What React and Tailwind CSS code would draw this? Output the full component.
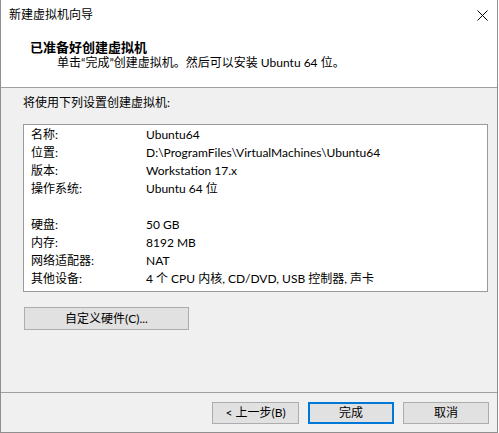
import React from 'react'

const rows = [
  ['名称:', 'Ubuntu64'],
  ['位置:', 'D:\\ProgramFiles\\VirtualMachines\\Ubuntu64'],
  ['版本:', 'Workstation 17.x'],
  ['操作系统:', 'Ubuntu 64 位'],
  ['', ''],
  ['硬盘:', '50 GB'],
  ['内存:', '8192 MB'],
  ['网络适配器:', 'NAT'],
  ['其他设备:', '4 个 CPU 内核, CD/DVD, USB 控制器, 声卡'],
]

const font = { fontFamily: 'Lato, "Noto Sans CJK SC", sans-serif' }

export default function App() {
  return (
    <div className="w-[499px] h-[433px] bg-white text-black text-[12px] leading-4" style={font}>
      <div className="w-[498px] h-[433px] flex flex-col border-l border-r border-b border-[#8f8f8f] bg-[#f0f0f0]">
        {/* header */}
        <div className="h-[88px] bg-white border-b border-[#a0a0a0]">
          <div className="h-[30px] flex items-center justify-between pl-[8px] pr-[9px]">
            <span>新建虚拟机向导</span>
            <svg width="11" height="11" viewBox="0 0 11 11">
              <path d="M0.5 0.5 L10.5 10.5 M10.5 0.5 L0.5 10.5" stroke="#000" strokeWidth="1" />
            </svg>
          </div>
          <div className="pl-[29px] mt-[9px] font-bold text-[13px]">已准备好创建虚拟机</div>
          <div className="pl-[56px]">单击“完成”创建虚拟机。然后可以安装 Ubuntu 64 位。</div>
        </div>

        {/* body */}
        <div className="h-[304px] pt-[7px]">
          <div className="pl-[22px]">将使用下列设置创建虚拟机:</div>
          <div className="ml-[22px] mt-[13px] w-[465px] h-[168px] bg-white border border-[#9a9a9a] pt-[1px] pl-[7px]">
            {rows.map(([k, v], i) => (
              <div key={i} className="flex h-[18px] items-center">
                <span className="w-[115px] shrink-0">{k}</span>
                <span className="whitespace-nowrap">{v}</span>
              </div>
            ))}
          </div>
          <button className="ml-[23px] mt-[15px] w-[165px] h-[23px] bg-[#e1e1e1] border border-[#adadad] flex items-center justify-center">
            自定义硬件(C)...
          </button>
        </div>

        {/* footer */}
        <div className="flex-1 border-t border-[#a0a0a0] flex justify-end gap-[9px] pt-[9px] pr-[8px]">
          <button className="w-[87px] h-[22px] bg-[#e1e1e1] border border-[#adadad] flex items-center justify-center">
            &lt; 上一步(B)
          </button>
          <button className="w-[86px] h-[22px] bg-[#e1e1e1] border-2 border-[#0078d7] flex items-center justify-center">
            完成
          </button>
          <button className="w-[86px] h-[22px] bg-[#e1e1e1] border border-[#adadad] flex items-center justify-center">
            取消
          </button>
        </div>
      </div>
    </div>
  )
}
